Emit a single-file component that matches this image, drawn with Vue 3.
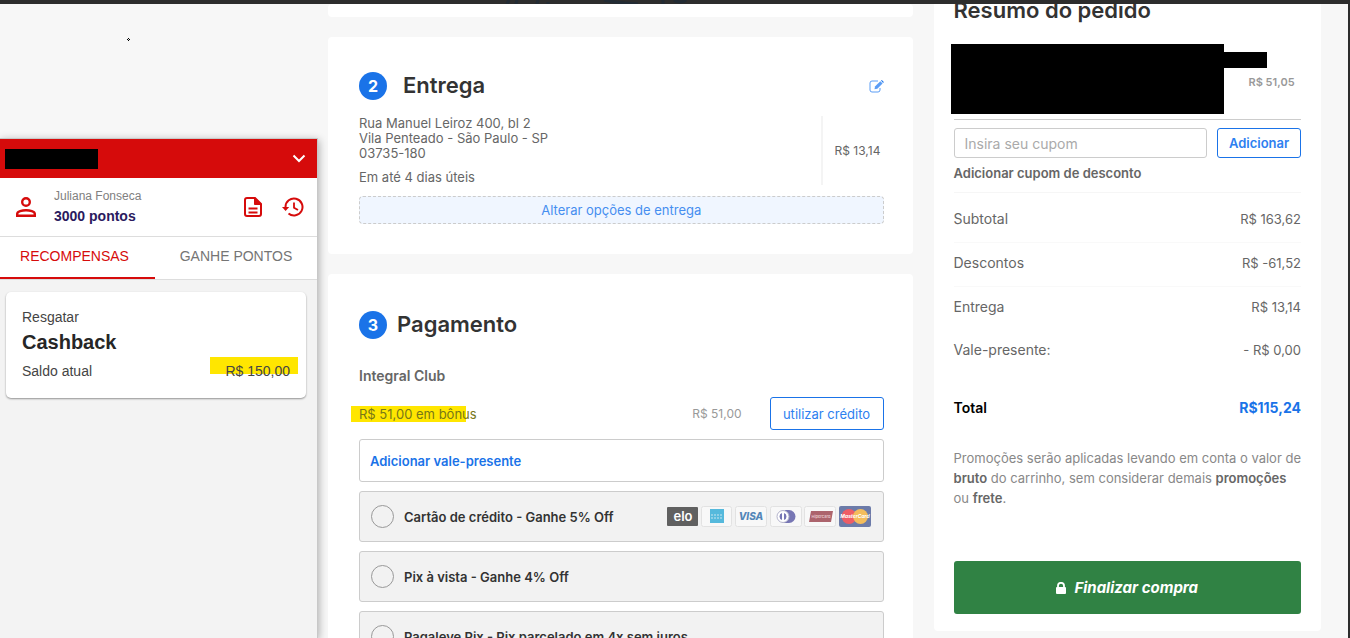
<script setup>
import { ref } from 'vue'

const coupon = ref('')
const payment = ref('')

const totals = [
  { label: 'Subtotal', value: 'R$ 163,62', line: true },
  { label: 'Descontos', value: 'R$ -61,52', line: true },
  { label: 'Entrega', value: 'R$ 13,14', line: false },
  { label: 'Vale-presente:', value: '- R$ 0,00', line: false },
]

const methods = [
  { id: 'card', label: 'Cartão de crédito - Ganhe 5% Off', brands: true },
  { id: 'pix', label: 'Pix à vista - Ganhe 4% Off' },
  { id: 'pagaleve', label: 'Pagaleve Pix - Pix parcelado em 4x sem juros' },
]
</script>

<template>
  <div class="page">
    <div class="topbar">
      <svg width="190" height="4" viewBox="0 0 190 4" fill="none" stroke="#222b34" stroke-width="3">
        <path d="M7 4l2-4M16 4l1-4M37 4l1-4M48 4V2M104 0q14 3 34 4M163 0v4M174 0q2 2 6 2t6-2" />
      </svg>
    </div>

    <div class="columns">
      <!-- Loyalty widget -->
      <div class="left">
        <svg class="cursor" width="3" height="3" viewBox="0 0 3 3">
          <path d="M1 0h1v1H1zM0 1h1v1H0zM2 1h1v1H2zM1 2h1v1H1z" fill="#000" />
        </svg>
        <aside class="club">
          <header class="club-head">
            <span class="redacted-name"></span>
            <button class="icon-btn" aria-label="Fechar">
              <svg width="14" height="9" viewBox="0 0 14 9" fill="none" stroke="#fff" stroke-width="2">
                <path d="M1.500 1.500L7 7l5.500-5.500" />
              </svg>
            </button>
          </header>
          <div class="club-user">
            <svg class="person" width="20" height="20" viewBox="0 0 20 20" fill="none" stroke="#d60b0b" stroke-width="2.400">
              <circle cx="10" cy="5" r="3.800" />
              <path d="M1.200 18.800v-2c0-2.400 5-3.600 8.800-3.600s8.800 1.200 8.800 3.600v2z" />
            </svg>
            <div class="who">
              <span class="user-name">Juliana Fonseca</span>
              <strong class="points">3000 pontos</strong>
            </div>
            <button class="icon-btn" aria-label="Extrato">
              <svg width="18" height="20" viewBox="0 0 18 20" fill="none" stroke="#d60b0b" stroke-width="2">
                <path d="M3 1h8l6 6v10q0 2-2 2H3q-2 0-2-2V3q0-2 2-2z" />
                <path d="M10.500 1v6.500H17z" fill="#d60b0b" stroke-width="1" />
                <path d="M4.500 11.500h9M4.500 15.500h9" stroke-width="1.800" />
              </svg>
            </button>
            <button class="icon-btn history" aria-label="Histórico">
              <svg width="22" height="20" viewBox="0 0 22 20" fill="none" stroke="#d60b0b" stroke-width="2">
                <path d="M3.500 10.500V10a8.500 8.500 0 1 1 3 6.500" />
                <path d="M0 10h7.200l-3.600 4z" fill="#d60b0b" stroke="none" />
                <path d="M12 5.500v5.200l4 2.400" stroke-width="1.800" />
              </svg>
            </button>
          </div>
          <nav class="tabs">
            <button class="tab active">RECOMPENSAS</button>
            <button class="tab">GANHE PONTOS</button>
          </nav>
          <div class="club-body">
            <section class="reward">
              <span>Resgatar</span>
              <h3>Cashback</h3>
              <div class="balance">
                <span>Saldo atual</span>
                <span class="marker">R$ 150,00</span>
              </div>
            </section>
          </div>
        </aside>
      </div>

      <!-- Checkout steps -->
      <main class="steps">
        <section class="card previous"></section>

        <section class="card delivery">
          <div class="step-head">
            <span class="step">2</span>
            <h2>Entrega</h2>
            <a class="edit" href="#" aria-label="Editar entrega">
              <svg width="15" height="13" viewBox="0 0 15 13" fill="none" stroke="#5b9df5">
                <path d="M9 1H3Q1 1 1 3v7q0 2 2 2h6q2 0 2-2V8" />
                <path d="M5.500 9.300l.5-2.800L11.300 1.200l2.300 2.300-5.300 5.300z" fill="#5b9df5" stroke="none" />
                <path d="M12 .6l.8-.6 2 2-.7.9z" fill="#1a73e8" stroke="none" />
              </svg>
            </a>
          </div>
          <div class="shipping">
            <div class="address">
              <p>Rua Manuel Leiroz 400, bl 2<br>Vila Penteado - São Paulo - SP<br>03735-180</p>
              <p class="eta">Em até 4 dias úteis</p>
            </div>
            <span class="ship-price">R$ 13,14</span>
          </div>
          <button class="change">Alterar opções de entrega</button>
        </section>

        <section class="card payment">
          <div class="step-head">
            <span class="step">3</span>
            <h2>Pagamento</h2>
          </div>
          <h4>Integral Club</h4>
          <div class="bonus">
            <span class="bonus-label">R$ 51,00 em bônus</span>
            <span class="bonus-value">R$ 51,00</span>
            <button class="outline use-credit">utilizar crédito</button>
          </div>
          <button class="gift">Adicionar vale-presente</button>
          <label v-for="m in methods" :key="m.id" class="method">
            <input v-model="payment" type="radio" name="payment" :value="m.id">
            <span>{{ m.label }}</span>
            <svg v-if="m.brands" class="brands" width="204" height="21" viewBox="0 0 204 21">
              <rect x="0" y="1" width="31" height="19" rx="1" fill="#606060" />
              <text x="16" y="15" class="elo" text-anchor="middle">elo</text>
              <g fill="#f8f8f8" stroke="#e2e2e2">
                <rect x="34.500" y=".5" width="30" height="20" rx="2" />
                <rect x="68.500" y=".5" width="31" height="20" rx="2" />
                <rect x="103.500" y=".5" width="31" height="20" rx="2" />
                <rect x="137.500" y=".5" width="31" height="20" rx="2" />
              </g>
              <rect x="43" y="3" width="14" height="14" fill="#55b9dc" />
              <path d="M44 9h12M44 12h12" stroke="#8fd0e6" stroke-width="2" stroke-dasharray="2 1" />
              <text x="84" y="14" class="visa" text-anchor="middle">VISA</text>
              <path d="M118 4h4a6.500 6.500 0 0 1 0 13h-5z" fill="#7776b4" />
              <circle cx="116" cy="10.500" r="6" fill="#fff" stroke="#b4b4cc" />
              <path d="M115 7a3.700 3.700 0 0 0 0 7zM117 7a3.700 3.700 0 0 1 0 7z" fill="#7776b4" />
              <path d="M144 5h22l-2 11h-22z" fill="#ac646d" />
              <text x="154" y="12" class="hiper" text-anchor="middle">Hipercard</text>
              <rect x="172" y="0" width="32" height="21" rx="2" fill="#6c7ba9" />
              <circle cx="182" cy="10.500" r="7.500" fill="#ee5d66" />
              <circle cx="193.500" cy="10.500" r="7.500" fill="#f4bd5c" />
              <text x="188" y="12" class="master" text-anchor="middle">MasterCard</text>
            </svg>
          </label>
        </section>
      </main>

      <!-- Order summary -->
      <aside class="summary">
        <h2>Resumo do pedido</h2>
        <div class="item">
          <span class="redacted-photo"></span>
          <span class="redacted-title"></span>
          <span class="item-price">R$ 51,05</span>
        </div>
        <form class="coupon" @submit.prevent>
          <input id="coupon" v-model="coupon" type="text" placeholder="Insira seu cupom">
          <button class="outline add">Adicionar</button>
        </form>
        <label class="coupon-label" for="coupon">Adicionar cupom de desconto</label>
        <dl class="totals">
          <div v-for="row in totals" :key="row.label" :class="{ line: row.line }">
            <dt>{{ row.label }}</dt>
            <dd>{{ row.value }}</dd>
          </div>
          <div class="total">
            <dt>Total</dt>
            <dd>R$115,24</dd>
          </div>
        </dl>
        <p class="note">
          Promoções serão aplicadas levando em conta o valor de<br>
          <b>bruto</b> do carrinho, sem considerar demais <b>promoções</b><br>
          ou <b>frete</b>.
        </p>
        <button class="finish">
          <svg width="10" height="12" viewBox="0 0 10 12">
            <path d="M2 6V3.800a3 3 0 0 1 6 0V6" fill="none" stroke="#fff" stroke-width="1.800" />
            <rect y="5" width="10" height="7" rx="1" fill="#fff" />
          </svg>
          Finalizar compra
        </button>
      </aside>
    </div>
  </div>
</template>

<style>
body {
  margin: 0;
  background: #f7f7f7;
}
</style>

<style scoped>
* {
  box-sizing: border-box;
}

.page {
  display: flex;
  flex-direction: column;
  height: 100vh;
  overflow: hidden;
  border-right: 2px solid #2d2d2d;
  background: #f7f7f7;
  color: #666;
  font-family: Inter, sans-serif;
  font-size: 13px;
}

h2, h3, h4, p, dl, dd {
  margin: 0;
}

button {
  font: inherit;
  color: inherit;
  cursor: pointer;
}

.topbar {
  flex: none;
  height: 4px;
  padding-left: 500px;
  background: #2d2d2d;
}

.topbar svg {
  display: block;
}

.columns {
  flex: 1;
  min-height: 0;
  display: flex;
  align-items: flex-start;
  overflow: hidden;
}

/* left */
.left {
  flex: 0 0 318px;
  align-self: stretch;
  display: flex;
  flex-direction: column;
}

.cursor {
  flex: none;
  margin: 34px 0 97px 127px;
}

.club {
  flex: 1;
  background: #f3f3f3;
  border-top: 1px solid #c8c8c8;
  border-right: 1px solid #c8c8c8;
  box-shadow: 1px 2px 8px rgba(0, 0, 0, 0.3);
  font-family: "Liberation Sans", Arial, sans-serif;
}

.club-head {
  display: flex;
  align-items: center;
  justify-content: space-between;
  height: 39px;
  padding: 0 11px 0 5px;
  background: #d60b0b;
}

.redacted-name {
  width: 93px;
  height: 20px;
  background: #000;
}

.icon-btn {
  display: flex;
  padding: 0;
  border: 0;
  background: none;
}

.club-user {
  display: flex;
  align-items: center;
  height: 59px;
  padding: 0 13px 0 16px;
  background: #fff;
  border-bottom: 1px solid #ddd;
}

.who {
  flex: 1;
  display: flex;
  flex-direction: column;
  margin-left: 18px;
}

.user-name {
  color: #808080;
  font-size: 12px;
  line-height: 18px;
}

.points {
  color: #2a1a5e;
  font-size: 14px;
  line-height: 22px;
}

.history {
  margin-left: 20px;
}

.tabs {
  display: flex;
  height: 43px;
  background: #fff;
  border-bottom: 1px solid #ddd;
}

.tab {
  flex: 1;
  padding: 0 0 4px;
  border: 0;
  background: none;
  color: #757575;
  font-size: 14px;
}

.tab.active {
  flex: 0 0 155px;
  padding: 0 6px 2px 0;
  border-bottom: 2px solid #d60b0b;
  color: #d60b0b;
}

.club-body {
  padding: 12px 11px 0 6px;
}

.reward {
  padding: 15px 16px 17px;
  border-radius: 5px;
  background: #fff;
  box-shadow: 0 1px 2px rgba(0, 0, 0, 0.4);
  color: #444;
  font-size: 14px;
  line-height: 20px;
}

.reward h3 {
  color: #262626;
  font-size: 20px;
  line-height: 30px;
}

.balance {
  display: flex;
  align-items: flex-end;
  justify-content: space-between;
}

.marker {
  margin-right: -8px;
  padding: 4px 8px 0 15px;
  background: linear-gradient(#ffe600, #ffe600) 0 0 / 100% 17px no-repeat;
}

/* steps */
.steps {
  flex: 1;
  min-width: 0;
  display: flex;
  flex-direction: column;
  gap: 20px;
  margin-left: 10px;
}

.card {
  padding: 0 29px 0 31px;
  border-radius: 4px;
  background: #fff;
}

.previous {
  height: 13px;
}

.delivery {
  padding-top: 34px;
  padding-bottom: 30px;
}

.payment {
  padding-top: 36px;
}

.step-head {
  display: flex;
  align-items: center;
  height: 30px;
}

.step {
  width: 28px;
  height: 28px;
  border-radius: 50%;
  background: #1a73e8;
  color: #fff;
  font-size: 16px;
  font-weight: 700;
  line-height: 28px;
  text-align: center;
}

.step-head h2,
.summary h2 {
  padding-bottom: 2px;
  color: #333;
  font-size: 22px;
  font-weight: 600;
}

.delivery h2 {
  margin-left: 16px;
}

.payment h2 {
  margin-left: 10px;
}

.edit {
  margin-left: auto;
}

.edit svg {
  display: block;
}

.shipping {
  display: flex;
  margin-top: 15px;
  line-height: 15px;
}

.address {
  flex: 1;
  height: 69px;
}

.eta {
  margin-top: 9px;
}

.ship-price {
  display: flex;
  align-items: center;
  width: 63px;
  padding-left: 12px;
  border-left: 2px solid #f4f4f4;
  font-size: 12px;
  white-space: nowrap;
}

.change {
  width: 100%;
  height: 28px;
  margin-top: 11px;
  border: 1px dashed #ccc;
  border-radius: 4px;
  background: #f0f6ff;
  color: #468ef0;
}

.payment h4 {
  margin-top: 26px;
  font-size: 14px;
  font-weight: 600;
  line-height: 20px;
}

.bonus {
  display: flex;
  align-items: center;
  margin-top: 11px;
  color: #999;
}

.bonus-label {
  margin-left: -8px;
  padding-left: 8px;
  background: linear-gradient(#ffe600, #ffe600) 0 0 / 115px 16px no-repeat;
  color: #777719;
}

.bonus-value {
  margin-left: auto;
  font-size: 12px;
}

.outline {
  border: 1px solid #1a73e8;
  border-radius: 3px;
  background: #fff;
  color: #2d7ff0;
}

.use-credit {
  width: 114px;
  height: 33px;
  margin-left: 28px;
  padding: 0;
}

.gift {
  display: block;
  width: 100%;
  height: 43px;
  margin-top: 9px;
  padding: 0 10px;
  border: 1px solid #ccc;
  border-radius: 3px;
  background: #fff;
  color: #1a73e8;
  font-weight: 600;
  text-align: left;
}

.method {
  display: flex;
  align-items: center;
  height: 51px;
  margin-top: 9px;
  padding: 0 12px 0 11px;
  border: 1px solid #ccc;
  border-radius: 3px;
  background: #f2f2f2;
  color: #333;
  font-weight: 600;
}

.method input {
  appearance: none;
  width: 23px;
  height: 23px;
  margin: 0 10px 0 0;
  border: 1px solid #999;
  border-radius: 50%;
}

.method input:checked {
  border: 7px solid #1a73e8;
}

.brands {
  margin-left: auto;
}

.elo {
  fill: #fff;
  font-size: 13px;
  font-weight: 600;
}

.visa {
  fill: #5386b8;
  font-size: 10px;
  font-style: italic;
  font-weight: 800;
}

.hiper {
  fill: #e8c9cc;
  font-size: 4px;
}

.master {
  fill: #fff;
  font-size: 5px;
  font-style: italic;
  font-weight: 700;
}

/* summary */
.summary {
  flex: 0 0 387px;
  margin: 0 27px 0 21px;
  padding: 0 20px 17px;
  border-radius: 0 0 4px 4px;
  background: #fff;
}

.summary h2 {
  line-height: 12px;
}

.item {
  display: flex;
  align-items: flex-start;
  height: 76px;
  margin-top: 26px;
  border-bottom: 1px solid #ccc;
}

.redacted-photo {
  flex: none;
  width: 273px;
  height: 70px;
  margin-left: -3px;
  background: #000;
}

.redacted-title {
  flex: none;
  width: 43px;
  height: 16px;
  margin-top: 8px;
  background: #000;
}

.item-price {
  margin: 30px 0 0 -18px;
  color: #999;
  font-size: 11px;
  font-weight: 600;
  line-height: 16px;
  white-space: nowrap;
}

.coupon {
  display: flex;
  gap: 10px;
  margin-top: 8px;
}

.coupon input {
  flex: 1;
  min-width: 0;
  height: 30px;
  padding: 0 10px;
  border: 1px solid #ccc;
  border-radius: 3px;
  font: inherit;
  font-size: 14px;
}

.coupon input::placeholder {
  color: #aaa;
}

.add {
  width: 84px;
  padding: 0;
  font-weight: 600;
}

.coupon-label {
  display: block;
  padding: 6px 0 9px;
  border-bottom: 1px solid #f6f6f6;
  font-weight: 600;
  line-height: 19px;
}

.totals div {
  display: flex;
  align-items: center;
  justify-content: space-between;
  height: 43px;
  padding-bottom: 4px;
  font-size: 14px;
}

.totals dd {
  font-size: 13px;
}

.totals .line {
  height: 44px;
  border-bottom: 1px solid #f9f9f9;
}

.totals div:first-child {
  height: 50px;
  padding: 2px 0 0;
}

.totals .total {
  height: 73px;
  color: #000;
  font-weight: 600;
}

.totals .total dd {
  color: #1a73e8;
  font-size: 14px;
  font-weight: 700;
}

.note {
  margin-top: 2px;
  color: #888;
  line-height: 20px;
  white-space: nowrap;
}

.note b {
  color: #666;
  font-weight: 600;
}

.finish {
  display: flex;
  align-items: center;
  justify-content: center;
  gap: 8px;
  width: 100%;
  height: 53px;
  margin-top: 53px;
  border: 0;
  border-radius: 3px;
  background: #308244;
  color: #fff;
  font-size: 15px;
  font-style: italic;
  font-weight: 700;
}
</style>
